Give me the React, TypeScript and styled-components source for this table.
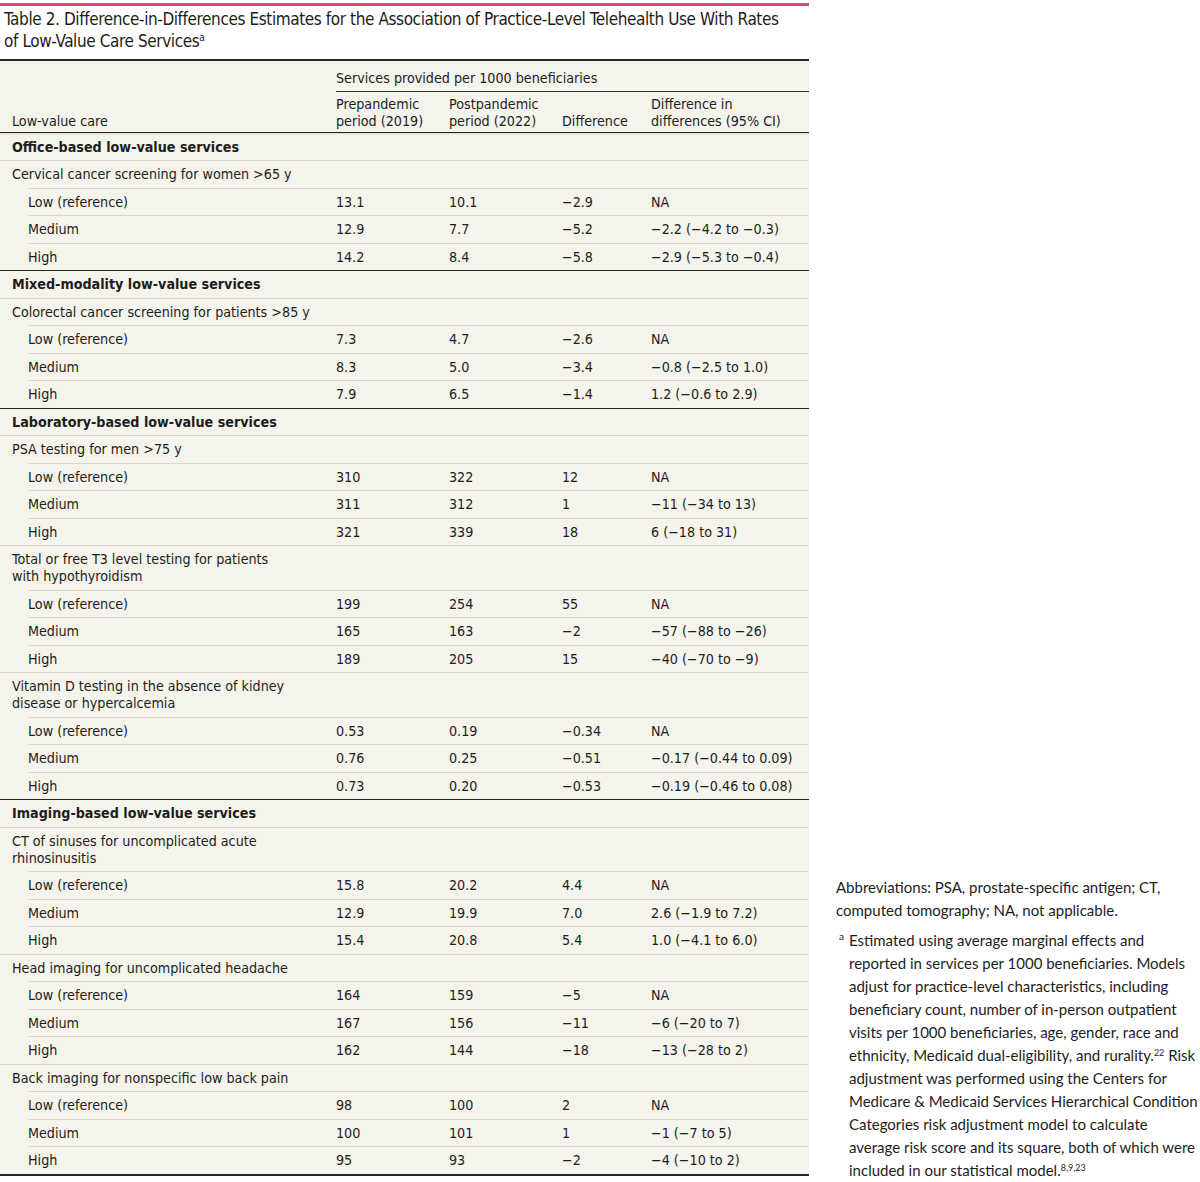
import React from 'react';
import styled, { createGlobalStyle } from 'styled-components';

const GlobalStyle = createGlobalStyle`
  html, body {
    margin: 0;
    padding: 0;
    background: #ffffff;
  }
  body {
    color: #1d1d1b;
  }
`;

const TABLE_FONT = `"DejaVu Sans Condensed", "Liberation Sans Narrow", "Roboto Condensed", "DejaVu Sans", sans-serif`;
const TITLE_FONT = `"DejaVu Sans Condensed", "Liberation Sans Narrow", "Roboto Condensed", sans-serif`;
const NOTE_FONT = `Lato, "Open Sans", "Liberation Sans", sans-serif`;

const Page = styled.div`
  width: 1200px;
  height: 1182px;
  display: flex;
  align-items: flex-end;
  box-sizing: border-box;
`;

const TableColumn = styled.div`
  width: 809px;
  flex-shrink: 0;
  align-self: flex-start;
  padding-top: 3px;
`;

const AccentBar = styled.div`
  height: 3px;
  background: #e2487d;
`;

const Title = styled.h2`
  margin: 0;
  padding: 2px 4px 7px 4px;
  font-family: ${TITLE_FONT};
  font-size: 17px;
  font-weight: 400;
  letter-spacing: -0.4px;
  line-height: 22px;
  white-space: nowrap;
  color: #1d1d1b;
`;

const Sup = styled.sup`
  font-size: 0.6em;
  line-height: 0;
  vertical-align: 0.6em;
`;

const Table = styled.div`
  background: #f4f3ec;
  border-top: 2px solid #262626;
  border-bottom: 2px solid #262626;
  font-family: ${TABLE_FONT};
  font-size: 14.2px;
  line-height: 17px;
  color: #1d1d1b;
`;

const HeadTop = styled.div`
  display: grid;
  grid-template-columns: 336px 1fr;
  padding-top: 8.5px;
`;

const SpanHead = styled.div`
  grid-column: 2;
  padding-bottom: 4px;
  border-bottom: 1.5px solid #333;
`;

const HeadRow = styled.div`
  display: grid;
  grid-template-columns: 336px 113px 113px 89px 1fr;
  align-items: end;
  padding: 4px 0 2px;
  border-bottom: 1.5px solid #262626;
`;

const HeadCell = styled.div<{ $first?: boolean }>`
  padding-left: ${p => (p.$first ? '12px' : '0')};
  white-space: nowrap;
`;

type RowKind = 'section' | 'group' | 'level';

const Row = styled.div<{ $kind: RowKind; $strong?: boolean }>`
  display: grid;
  grid-template-columns: ${p => (p.$kind === 'level' ? '308px' : '324px')} 113px 113px 89px 1fr;
  margin-left: ${p => (p.$kind === 'level' ? '28px' : '0')};
  padding: 5px 0 4.5px ${p => (p.$kind === 'level' ? '0' : '12px')};
  font-weight: ${p => (p.$kind === 'section' ? 700 : 400)};
  border-top: ${p => (p.$strong ? '1.5px solid #262626' : '1px solid #dcd8c9')};
  white-space: nowrap;
`;

const Cell = styled.div``;

const Notes = styled.div`
  margin-left: 27px;
  width: 364px;
  font-family: ${NOTE_FONT};
  font-size: 15px;
  line-height: 23px;
  color: #1d1d1b;
`;

const Note = styled.p<{ $marked?: boolean }>`
  margin: 0 0 7px 0;
  padding-left: ${p => (p.$marked ? '13px' : '0')};
  position: relative;
  &:last-child {
    margin-bottom: 0;
  }
`;

const NoteMark = styled.span`
  position: absolute;
  left: 3px;
  top: -4px;
  font-size: 10px;
`;

interface Level {
  label: string;
  pre: string;
  post: string;
  diff: string;
  did: string;
}

interface Group {
  lines: string[];
  levels: Level[];
}

interface Section {
  title: string;
  groups: Group[];
}

const lv = (label: string, pre: string, post: string, diff: string, did: string): Level => ({
  label,
  pre,
  post,
  diff,
  did,
});

const sections: Section[] = [
  {
    title: 'Office-based low-value services',
    groups: [
      {
        lines: ['Cervical cancer screening for women >65 y'],
        levels: [
          lv('Low (reference)', '13.1', '10.1', '−2.9', 'NA'),
          lv('Medium', '12.9', '7.7', '−5.2', '−2.2 (−4.2 to −0.3)'),
          lv('High', '14.2', '8.4', '−5.8', '−2.9 (−5.3 to −0.4)'),
        ],
      },
    ],
  },
  {
    title: 'Mixed-modality low-value services',
    groups: [
      {
        lines: ['Colorectal cancer screening for patients >85 y'],
        levels: [
          lv('Low (reference)', '7.3', '4.7', '−2.6', 'NA'),
          lv('Medium', '8.3', '5.0', '−3.4', '−0.8 (−2.5 to 1.0)'),
          lv('High', '7.9', '6.5', '−1.4', '1.2 (−0.6 to 2.9)'),
        ],
      },
    ],
  },
  {
    title: 'Laboratory-based low-value services',
    groups: [
      {
        lines: ['PSA testing for men >75 y'],
        levels: [
          lv('Low (reference)', '310', '322', '12', 'NA'),
          lv('Medium', '311', '312', '1', '−11 (−34 to 13)'),
          lv('High', '321', '339', '18', '6 (−18 to 31)'),
        ],
      },
      {
        lines: ['Total or free T3 level testing for patients', 'with hypothyroidism'],
        levels: [
          lv('Low (reference)', '199', '254', '55', 'NA'),
          lv('Medium', '165', '163', '−2', '−57 (−88 to −26)'),
          lv('High', '189', '205', '15', '−40 (−70 to −9)'),
        ],
      },
      {
        lines: ['Vitamin D testing in the absence of kidney', 'disease or hypercalcemia'],
        levels: [
          lv('Low (reference)', '0.53', '0.19', '−0.34', 'NA'),
          lv('Medium', '0.76', '0.25', '−0.51', '−0.17 (−0.44 to 0.09)'),
          lv('High', '0.73', '0.20', '−0.53', '−0.19 (−0.46 to 0.08)'),
        ],
      },
    ],
  },
  {
    title: 'Imaging-based low-value services',
    groups: [
      {
        lines: ['CT of sinuses for uncomplicated acute', 'rhinosinusitis'],
        levels: [
          lv('Low (reference)', '15.8', '20.2', '4.4', 'NA'),
          lv('Medium', '12.9', '19.9', '7.0', '2.6 (−1.9 to 7.2)'),
          lv('High', '15.4', '20.8', '5.4', '1.0 (−4.1 to 6.0)'),
        ],
      },
      {
        lines: ['Head imaging for uncomplicated headache'],
        levels: [
          lv('Low (reference)', '164', '159', '−5', 'NA'),
          lv('Medium', '167', '156', '−11', '−6 (−20 to 7)'),
          lv('High', '162', '144', '−18', '−13 (−28 to 2)'),
        ],
      },
      {
        lines: ['Back imaging for nonspecific low back pain'],
        levels: [
          lv('Low (reference)', '98', '100', '2', 'NA'),
          lv('Medium', '100', '101', '1', '−1 (−7 to 5)'),
          lv('High', '95', '93', '−2', '−4 (−10 to 2)'),
        ],
      },
    ],
  },
];

const App: React.FC = () => {
  return (
    <>
      <GlobalStyle />
      <Page>
        <TableColumn>
          <AccentBar />
          <Title>
            Table 2. Difference-in-Differences Estimates for the Association of Practice-Level Telehealth Use With Rates
            <br />
            of Low-Value Care Services<Sup>a</Sup>
          </Title>
          <Table>
            <HeadTop>
              <SpanHead>Services provided per 1000 beneficiaries</SpanHead>
            </HeadTop>
            <HeadRow>
              <HeadCell $first>Low-value care</HeadCell>
              <HeadCell>
                Prepandemic
                <br />
                period (2019)
              </HeadCell>
              <HeadCell>
                Postpandemic
                <br />
                period (2022)
              </HeadCell>
              <HeadCell>Difference</HeadCell>
              <HeadCell>
                Difference in
                <br />
                differences (95% CI)
              </HeadCell>
            </HeadRow>
            {sections.map((section, si) => (
              <React.Fragment key={section.title}>
                <Row $kind="section" $strong={si > 0}>
                  <Cell>{section.title}</Cell>
                </Row>
                {section.groups.map(group => (
                  <React.Fragment key={group.lines[0]}>
                    <Row $kind="group">
                      <Cell>
                        {group.lines.map((line, i) => (
                          <React.Fragment key={line}>
                            {i > 0 && <br />}
                            {line}
                          </React.Fragment>
                        ))}
                      </Cell>
                    </Row>
                    {group.levels.map(level => (
                      <Row $kind="level" key={level.label}>
                        <Cell>{level.label}</Cell>
                        <Cell>{level.pre}</Cell>
                        <Cell>{level.post}</Cell>
                        <Cell>{level.diff}</Cell>
                        <Cell>{level.did}</Cell>
                      </Row>
                    ))}
                  </React.Fragment>
                ))}
              </React.Fragment>
            ))}
          </Table>
        </TableColumn>
        <Notes>
          <Note>Abbreviations: PSA, prostate-specific antigen; CT, computed tomography; NA, not applicable.</Note>
          <Note $marked>
            <NoteMark>a</NoteMark>
            Estimated using average marginal effects and reported in services per 1000 beneficiaries. Models adjust
            for practice-level characteristics, including beneficiary count, number of in-person outpatient visits per
            1000 beneficiaries, age, gender, race and ethnicity, Medicaid dual-eligibility, and rurality.<Sup>22</Sup>{' '}
            Risk adjustment was performed using the Centers for Medicare &amp; Medicaid Services Hierarchical Condition
            Categories risk adjustment model to calculate average risk score and its square, both of which were
            included in our statistical model.<Sup>8,9,23</Sup>
          </Note>
        </Notes>
      </Page>
    </>
  );
};

export default App;
